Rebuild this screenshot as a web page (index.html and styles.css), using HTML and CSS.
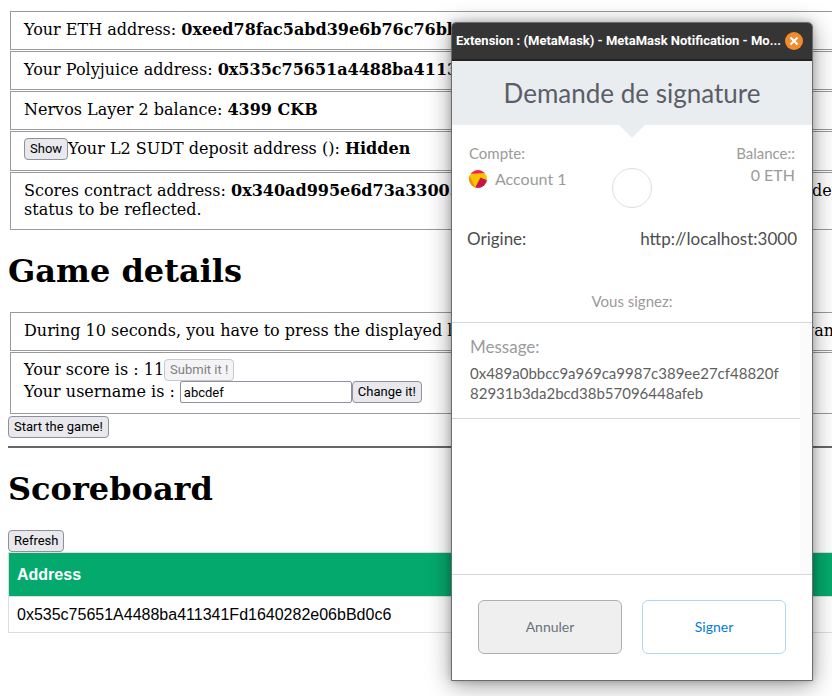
FILE: index.html
```html
<!DOCTYPE html>
<html lang="en">
<head>
<meta charset="utf-8">
<title>Game details</title>
<link rel="stylesheet" href="styles.css">
</head>
<body>
<main class="page">
  <section class="rows">
    <div class="row">Your ETH address: <b>0xeed78fac5abd39e6b76c76bbbdbdacd</b></div>
    <div class="row">Your Polyjuice address: <b>0x535c75651a4488ba411341fd164028</b></div>
    <div class="row">Nervos Layer 2 balance: <b>4399 CKB</b></div>
    <div class="row tall"><button class="btn" type="button">Show</button>Your L2 SUDT deposit address (): <b>Hidden</b></div>
    <div class="row">
      <div class="split"><span class="lead">Scores contract address: <b>0x340ad995e6d73a33003</b></span><span class="tail">deploy</span></div>
      status to be reflected.
    </div>
  </section>

  <h1>Game details</h1>
  <section class="rows">
    <div class="row">
      <div class="split"><span class="lead">During 10 seconds, you have to press the displayed letter</span><span class="tail wide">game.</span></div>
    </div>
    <div class="row tall">
      <div>Your score is : 11<button class="btn" type="button" disabled>Submit it !</button></div>
      <div class="user"><label for="username">Your username is :</label><input id="username" type="text" value="abcdef"><button class="btn" type="button">Change it!</button></div>
    </div>
  </section>
  <button class="btn block" type="button">Start the game!</button>
  <hr>

  <h1>Scoreboard</h1>
  <button class="btn block" type="button">Refresh</button>
  <table class="scores">
    <thead><tr><th>Address</th></tr></thead>
    <tbody><tr><td>0x535c75651A4488ba411341Fd1640282e06bBd0c6</td></tr></tbody>
  </table>
</main>

<aside class="popup">
  <header class="titlebar">
    <span class="title">Extension : (MetaMask) - MetaMask Notification - Mo...</span>
    <button class="close" type="button" aria-label="Close">
      <svg viewBox="0 0 18 18" width="18" height="18"><circle cx="9" cy="9" r="9" fill="#f28b2c"/><path d="M5.500 5.500l7 7M12.500 5.500l-7 7" stroke="#fff" stroke-width="2.200"/></svg>
    </button>
  </header>
  <h2 class="heading">Demande de signature</h2>
  <div class="account">
    <div>
      <div class="caption">Compte:</div>
      <div class="name">
        <svg viewBox="0 0 18 18" width="18" height="18">
          <defs><clipPath id="disc"><circle cx="9" cy="9" r="9"/></clipPath></defs>
          <g clip-path="url(#disc)">
            <path fill="#f6c500" d="M0 0h18v18H0z"/>
            <path fill="#fb1960" d="M0 0h18v3L1 3.800z"/>
            <path fill="#f68a0c" d="M0 5L6.500 18H0z"/>
            <path fill="#c8144b" d="M11.500 7.500l7 3V18H6z"/>
          </g>
        </svg>
        <span>Account 1</span>
      </div>
    </div>
    <span class="ring"></span>
    <div class="balance">
      <div class="caption">Balance::</div>
      <div>0 ETH</div>
    </div>
  </div>
  <div class="origin"><span>Origine:</span><span>http://localhost:3000</span></div>
  <div class="signing">Vous signez:</div>
  <div class="scroll">
    <div class="message">
      <div class="label">Message:</div>
      <div class="hash">0x489a0bbcc9a969ca9987c389ee27cf48820f<br>82931b3da2bcd38b57096448afeb</div>
    </div>
  </div>
  <footer class="actions">
    <button class="cancel" type="button">Annuler</button>
    <button class="sign" type="button">Signer</button>
  </footer>
</aside>
</body>
</html>
```

FILE: styles.css
```css
* { box-sizing: border-box; }
body {
  margin: 0;
  padding: 11px 8px;
  overflow: hidden;
  background: #fff;
  color: #000;
  font: 16px/19px "DejaVu Serif", serif;
}
.page { margin-right: -40px; }
.rows {
  display: grid;
  gap: 1px;
  margin-left: 2px;
}
.row {
  padding: 8px 13px 10px;
  border: 1px solid #9a9a9a;
  white-space: nowrap;
  min-width: 0;
}
.row.tall { padding-top: 6px; line-height: 22px; }
.tall .btn { vertical-align: top; }
.split { display: flex; }
.lead { flex: 1; min-width: 0; overflow: hidden; }
.tail { flex: 0 0 38px; min-width: 0; }
.tail.wide { flex-basis: 46px; }
h1 { margin: 22px 0; font-size: 32px; line-height: 38px; }
.btn {
  height: 22px;
  padding: 0 5px;
  border: 1px solid #8f8f9d;
  border-radius: 4px;
  background: #e9e9ed;
  color: #000;
  font: 13px/18px Roboto, sans-serif;
}
.btn:disabled { background: #f4f4f6; border-color: #c7c7ce; color: #808080; }
.btn.block { display: block; }
.rows + .btn { margin-top: 2px; }
.user { display: flex; }
.user input {
  width: 172px;
  height: 22px;
  margin-left: 5px;
  padding: 0 3px;
  border: 1px solid #8f8f9d;
  border-radius: 2px;
  font: 13px/18px Roboto, sans-serif;
}
hr { height: 2px; margin: 8px 0 0; border: 0; background: #666; }
.scores {
  width: 100%;
  border-collapse: collapse;
  font: 16px/19px "Liberation Sans", Arial, sans-serif;
}
.scores th, .scores td { padding: 8px; border: 1px solid #ddd; text-align: left; }
.scores th { padding: 12px 8px; background: #04aa6d; color: #fff; }

.popup {
  position: absolute;
  top: 22px;
  right: 19px;
  width: 362px;
  border: 1px solid #6c6c6c;
  border-radius: 5px 5px 0 0;
  background: #fff;
  box-shadow: 0 4px 24px rgba(0, 0, 0, .4), 0 0 6px rgba(0, 0, 0, .2);
  color: #9b9b9b;
  font: 16px/22px Lato, sans-serif;
}
.titlebar {
  display: flex;
  align-items: center;
  justify-content: space-between;
  height: 38px;
  padding: 0 9px 0 4px;
  border-bottom: 2px solid #232323;
  border-radius: 4px 4px 0 0;
  background: #353535;
  color: #fff;
  font: bold 13px/18px Roboto, sans-serif;
  white-space: nowrap;
}
.close { padding: 0; border: 0; background: none; line-height: 0; }
.heading {
  position: relative;
  margin: 0;
  padding: 16px 0;
  background: #e9edf0;
  color: #5b5d67;
  font-size: 26px;
  font-weight: 400;
  line-height: 32px;
  text-align: center;
}
.heading::after {
  content: "";
  position: absolute;
  top: 100%;
  left: 50%;
  margin-left: -13px;
  border: 13px solid transparent;
  border-top-color: #e9edf0;
  border-bottom: 0;
}
.account {
  display: grid;
  grid-template-columns: 1fr 40px 1fr;
  padding: 17px 17px 0;
}
.caption { font-size: 15px; }
.name { display: flex; align-items: center; gap: 8px; padding-top: 4px; }
.ring { width: 40px; height: 40px; margin-top: 26px; border: 1px solid #dedede; border-radius: 50%; }
.balance { text-align: right; }
.origin {
  display: flex;
  justify-content: space-between;
  padding: 20px 15px 0;
  color: #4d4d4d;
  font-size: 17px;
}
.signing { padding: 40px 0 10px; border-bottom: 1px solid #d2d8dd; font-size: 15px; text-align: center; }
.scroll { height: 251px; padding-right: 12px; background: linear-gradient(#fbfbfb, #fbfbfb) right / 12px 100% no-repeat; }
.message { padding: 13px 18px 15px; border-bottom: 1px solid #d2d8dd; }
.label { font-size: 17px; }
.hash { padding-top: 5px; color: #5f5f5f; font-size: 15px; line-height: 20px; }
.actions {
  display: grid;
  grid-template-columns: 1fr 1fr;
  gap: 20px;
  padding: 25px 26px 26px;
  border-top: 1px solid #d2d8dd;
}
.actions button { height: 54px; border: 1px solid #b0b0b0; border-radius: 6px; font: 14px/20px Lato, sans-serif; }
.cancel { background: #efefef; color: #6a737d; }
.actions .sign { border-color: #b0d7f2; background: #fff; color: #037dd6; }
```
